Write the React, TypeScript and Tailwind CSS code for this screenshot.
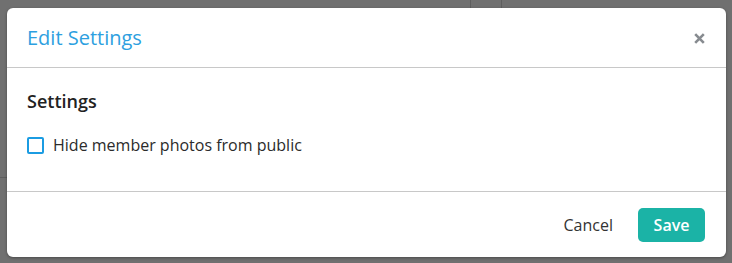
import React from "react";

export default function App() {
  return (
    <div
      className="relative w-[732px] h-[263px] bg-[#707070] overflow-hidden pt-[8px] pl-[7px]"
      style={{ fontFamily: '"Open Sans", "Noto Sans", sans-serif' }}
    >
      <div className="absolute left-[470px] top-0 h-[8px] w-px bg-[#5e5e5e]" />
      <div className="absolute left-[501px] top-0 h-[8px] w-px bg-[#5e5e5e]" />
      <div className="absolute left-0 top-[177px] w-[7px] h-px bg-[#5e5e5e]" />
      <div className="relative w-[719px] h-[249px] bg-white rounded-[6px] shadow-[0_1px_3px_rgba(0,0,0,0.35)] flex flex-col">
        <div className="h-[60px] flex items-center justify-between pl-[20px] pr-[21px] border-b border-[#c8c8c8]">
          <span className="text-[20px] text-[#2d9fe0] leading-none">Edit Settings</span>
          <svg width="11" height="11" viewBox="0 0 11 11" className="mt-[1px]">
            <path d="M1.2 1.2 L9.8 9.8 M9.8 1.2 L1.2 9.8" stroke="#878b90" strokeWidth="2.6" strokeLinecap="butt" />
          </svg>
        </div>
        <div className="h-[124px] border-b border-[#c8c8c8] pl-[20px] pt-[21px]">
          <div className="text-[18px] font-semibold text-[#222] leading-[24px]">Settings</div>
          <div className="flex items-center mt-[22px]">
            <div className="w-[17px] h-[17px] border-2 border-[#1b9ce2] rounded-[2px]" />
            <span className="ml-[9px] text-[16px] text-[#2b2b2b] leading-[20px]">
              Hide member photos from public
            </span>
          </div>
        </div>
        <div className="flex-1 flex items-center justify-end pr-[21px]">
          <span className="text-[16px] text-[#333] mr-[25px] mt-[1px]">Cancel</span>
          <div className="w-[67px] h-[34px] rounded-[5px] bg-[#1bb3a6] text-white text-[16px] font-semibold flex items-center justify-center">
            Save
          </div>
        </div>
      </div>
    </div>
  );
}
